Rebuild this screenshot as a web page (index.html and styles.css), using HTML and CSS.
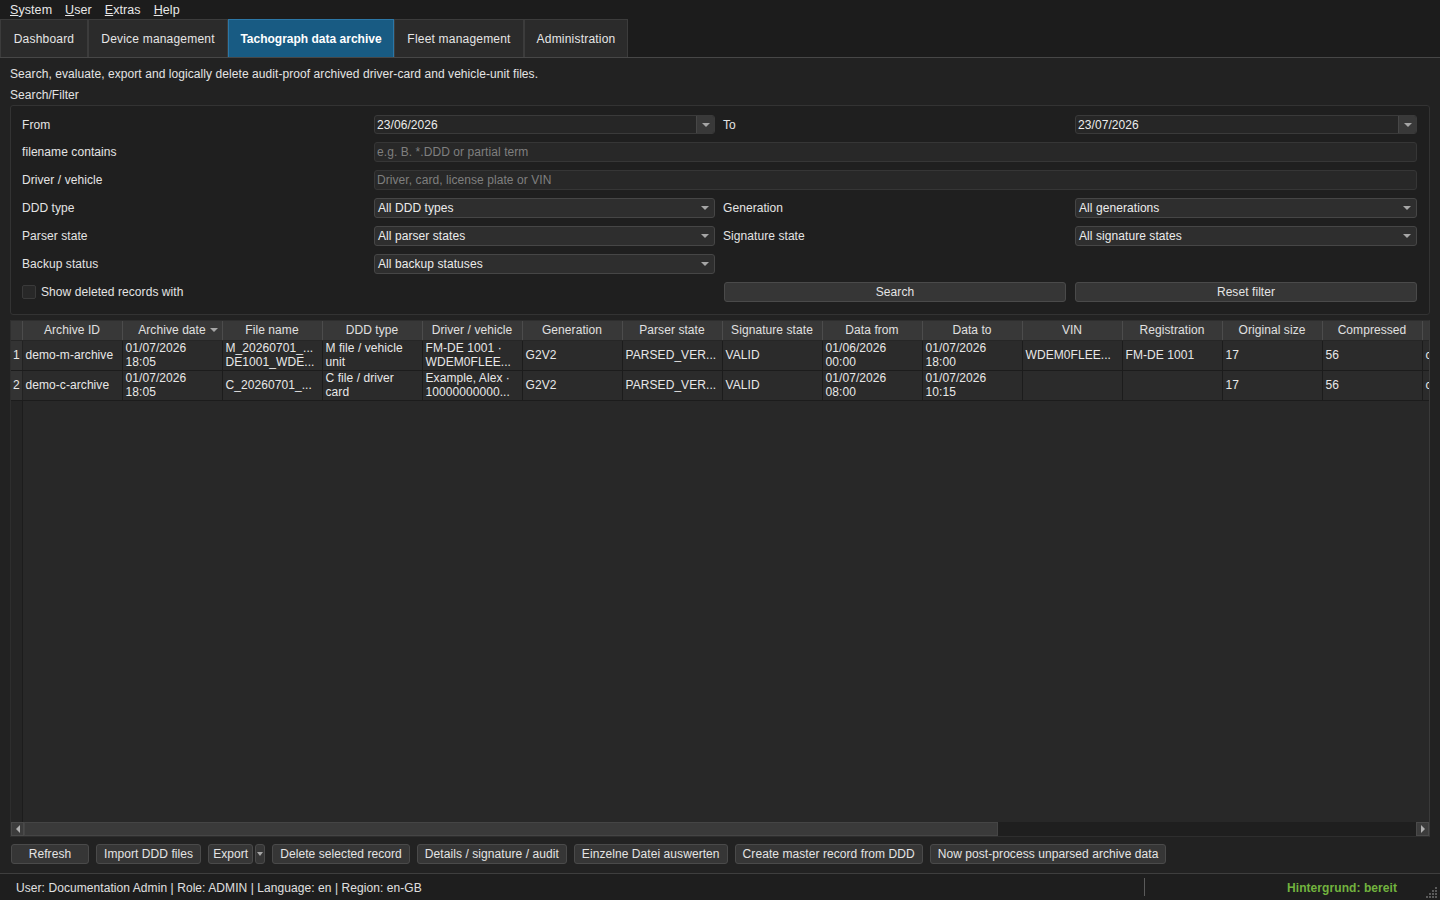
FILE: index.html
```html
<!DOCTYPE html>
<html lang="en">
<head>
  <meta charset="UTF-8">
  <title>Tachograph data archive</title>
  <link rel="stylesheet" href="styles.css">
</head>
<body>

  <div class="menubar">
    <span><u>S</u>ystem</span>
    <span><u>U</u>ser</span>
    <span><u>E</u>xtras</span>
    <span><u>H</u>elp</span>
  </div>

  <div class="tabs">
    <div class="tab t-dash">Dashboard</div>
    <div class="tab t-dev">Device management</div>
    <div class="tab t-arch active">Tachograph data archive</div>
    <div class="tab t-fleet">Fleet management</div>
    <div class="tab t-admin">Administration</div>
  </div>

  <div class="main">
    <div class="desc">Search, evaluate, export and logically delete audit-proof archived driver-card and vehicle-unit files.</div>
    <div class="section-title">Search/Filter</div>

    <div class="filter">
      <div class="lbl first">From</div>
      <div class="field date first"><span class="val">23/06/2026</span><span class="spin"><i class="tri"></i></span></div>
      <div class="lbl lbl2 first">To</div>
      <div class="field date first"><span class="val">23/07/2026</span><span class="spin"><i class="tri"></i></span></div>

      <div class="lbl">filename contains</div>
      <div class="field wide"><span class="ph">e.g. B. *.DDD or partial term</span></div>

      <div class="lbl">Driver / vehicle</div>
      <div class="field wide"><span class="ph">Driver, card, license plate or VIN</span></div>

      <div class="lbl">DDD type</div>
      <div class="field combo"><span class="val">All DDD types</span><span class="arrow"><i class="tri"></i></span></div>
      <div class="lbl lbl2">Generation</div>
      <div class="field combo"><span class="val">All generations</span><span class="arrow"><i class="tri"></i></span></div>

      <div class="lbl">Parser state</div>
      <div class="field combo"><span class="val">All parser states</span><span class="arrow"><i class="tri"></i></span></div>
      <div class="lbl lbl2">Signature state</div>
      <div class="field combo"><span class="val">All signature states</span><span class="arrow"><i class="tri"></i></span></div>

      <div class="lbl">Backup status</div>
      <div class="field combo"><span class="val">All backup statuses</span><span class="arrow"><i class="tri"></i></span></div>
      <div></div>
      <div></div>

      <div class="lbl check"><span class="box"></span>Show deleted records with</div>
      <div></div>
      <div class="btn-cell"><button class="btn full">Search</button></div>
      <div><button class="btn full">Reset filter</button></div>
    </div>

    <div class="grid-box">
      <div class="viewport">
        <table class="grid">
          <colgroup>
            <col class="rownum">
            <col><col><col><col><col><col><col><col><col><col><col><col><col><col><col>
          </colgroup>
          <thead>
            <tr>
              <th></th>
              <th>Archive ID</th>
              <th class="sorted">Archive date<i class="tri sort"></i></th>
              <th>File name</th>
              <th>DDD type</th>
              <th>Driver / vehicle</th>
              <th>Generation</th>
              <th>Parser state</th>
              <th>Signature state</th>
              <th>Data from</th>
              <th>Data to</th>
              <th>VIN</th>
              <th>Registration</th>
              <th>Original size</th>
              <th>Compressed</th>
              <th></th>
            </tr>
          </thead>
          <tbody>
            <tr>
              <td class="num">1</td>
              <td>demo-m-archive</td>
              <td>01/07/2026<br>18:05</td>
              <td>M_20260701_...<br>DE1001_WDE...</td>
              <td>M file / vehicle<br>unit</td>
              <td>FM-DE 1001 ·<br>WDEM0FLEE...</td>
              <td>G2V2</td>
              <td>PARSED_VER...</td>
              <td>VALID</td>
              <td>01/06/2026<br>00:00</td>
              <td>01/07/2026<br>18:00</td>
              <td>WDEM0FLEE...</td>
              <td>FM-DE 1001</td>
              <td>17</td>
              <td>56</td>
              <td class="cut">c</td>
            </tr>
            <tr>
              <td class="num">2</td>
              <td>demo-c-archive</td>
              <td>01/07/2026<br>18:05</td>
              <td>C_20260701_...</td>
              <td>C file / driver<br>card</td>
              <td>Example, Alex ·<br>10000000000...</td>
              <td>G2V2</td>
              <td>PARSED_VER...</td>
              <td>VALID</td>
              <td>01/07/2026<br>08:00</td>
              <td>01/07/2026<br>10:15</td>
              <td></td>
              <td></td>
              <td>17</td>
              <td>56</td>
              <td class="cut">c</td>
            </tr>
          </tbody>
        </table>
      </div>
      <div class="hscroll">
        <span class="sbtn"><i class="tri left"></i></span>
        <span class="track"><span class="thumb"></span></span>
        <span class="sbtn"><i class="tri right"></i></span>
      </div>
    </div>

    <div class="actions">
      <button class="btn refresh">Refresh</button>
      <button class="btn">Import DDD files</button>
      <div class="split">
        <button class="btn export">Export</button>
        <button class="btn drop"><i class="tri"></i></button>
      </div>
      <button class="btn">Delete selected record</button>
      <button class="btn">Details / signature / audit</button>
      <button class="btn">Einzelne Datei auswerten</button>
      <button class="btn">Create master record from DDD</button>
      <button class="btn">Now post-process unparsed archive data</button>
    </div>
  </div>

  <div class="statusbar">
    <div class="status-text">User: Documentation Admin | Role: ADMIN | Language: en | Region: en-GB</div>
    <div class="status-sep"></div>
    <div class="status-bg">Hintergrund: bereit</div>
    <svg class="grip" width="12" height="12" viewBox="0 0 12 12">
      <rect x="9" y="0" width="2" height="2" fill="#5a5a5a"/>
      <rect x="6" y="3" width="2" height="2" fill="#5a5a5a"/>
      <rect x="9" y="3" width="2" height="2" fill="#5a5a5a"/>
      <rect x="3" y="6" width="2" height="2" fill="#5a5a5a"/>
      <rect x="6" y="6" width="2" height="2" fill="#5a5a5a"/>
      <rect x="9" y="6" width="2" height="2" fill="#5a5a5a"/>
      <rect x="0" y="9" width="2" height="2" fill="#5a5a5a"/>
      <rect x="3" y="9" width="2" height="2" fill="#5a5a5a"/>
      <rect x="6" y="9" width="2" height="2" fill="#5a5a5a"/>
      <rect x="9" y="9" width="2" height="2" fill="#5a5a5a"/>
    </svg>
  </div>

</body>
</html>
```

FILE: styles.css
```css
* {
  box-sizing: border-box;
}

html, body {
  margin: 0;
  padding: 0;
}

body {
  font-family: "Liberation Sans", Arial, sans-serif;
  font-size: 12px;
  letter-spacing: 0.07px;
  color: #e4e4e4;
  background-color: #1e1e1e;
  width: 1440px;
  height: 900px;
  overflow: hidden;
  display: flex;
  flex-direction: column;
}

/* menu bar */
.menubar {
  height: 19px;
  display: flex;
  align-items: center;
  gap: 13px;
  padding-left: 10px;
  font-size: 12.5px;
  background-color: #1c1c1c;
  color: #e8e8e8;
}

/* tabs */
.tabs {
  display: flex;
  height: 39px;
  background-color: #1c1c1c;
  border-bottom: 1px solid #474747;
}

.tab {
  display: flex;
  align-items: center;
  justify-content: center;
  background-color: #2b2b2b;
  border: 1px solid #3c3c3c;
  border-bottom: none;
  color: #e6e6e6;
  letter-spacing: 0.2px;
}

.t-dash { width: 88px; }
.t-dev { width: 140px; }
.t-arch { width: 166px; }
.t-fleet { width: 130px; }
.t-admin { width: 104px; }

.tab.active {
  background-color: #185b83;
  border-color: #2c77a6;
  color: #fff;
  font-weight: bold;
  letter-spacing: 0;
}

/* main area */
.main {
  flex: 1;
  display: flex;
  flex-direction: column;
  padding: 9px 10px 9px 10px;
  background-color: #222222;
  border-bottom: 1px solid #3e3e3e;
}

.desc {
  line-height: 14px;
}

.section-title {
  line-height: 14px;
  margin-top: 7px;
}

.filter {
  margin-top: 3px;
  display: grid;
  grid-template-columns: 352px 341px 360px 342px;
  grid-template-rows: 21px;
  grid-auto-rows: 20px;
  row-gap: 8px;
  padding: 7px 12px 12px 11px;
  background-color: #1f1f1f;
  border: 1px solid #333;
  border-radius: 3px;
}

.lbl {
  display: flex;
  align-items: center;
}

.first {
  align-self: end;
  height: 19px;
}

.lbl2 {
  padding-left: 8px;
}

.field {
  display: flex;
  align-items: center;
  height: 20px;
  background-color: #282828;
  border: 1px solid #363636;
  border-radius: 3px;
  padding-left: 2px;
  overflow: hidden;
}

.field.first {
  height: 19px;
}

.field.wide {
  grid-column: 2 / 5;
}

.field .val {
  flex: 1;
  color: #ececec;
}

.field .ph {
  color: #7f7f7f;
}

.field.date {
  background-color: #262626;
  border-color: #3a3a3a;
}

.field.combo {
  background-color: #2e2e2e;
  border-color: #464646;
  padding-left: 3px;
}

.spin {
  width: 18px;
  height: 100%;
  display: flex;
  align-items: center;
  justify-content: center;
  background-color: #393939;
  border-left: 1px solid #474747;
}

.arrow {
  width: 18px;
  display: flex;
  justify-content: center;
}

.tri {
  display: inline-block;
  width: 0;
  height: 0;
  border-left: 4px solid transparent;
  border-right: 4px solid transparent;
  border-top: 4px solid #a6a6a6;
}

.tri.left {
  border-top: 4px solid transparent;
  border-bottom: 4px solid transparent;
  border-right: 4px solid #b0b0b0;
  border-left: none;
}

.tri.right {
  border-top: 4px solid transparent;
  border-bottom: 4px solid transparent;
  border-left: 4px solid #b0b0b0;
  border-right: none;
}

.check {
  gap: 5px;
}

.box {
  width: 14px;
  height: 14px;
  background-color: #282828;
  border: 1px solid #3a3a3a;
  border-radius: 2px;
}

.btn-cell {
  padding: 0 9px;
}

.btn {
  font-family: inherit;
  font-size: 12px;
  letter-spacing: 0.07px;
  color: #e4e4e4;
  height: 20px;
  padding: 0 7px;
  background-color: #363636;
  border: 1px solid #4a4a4a;
  border-radius: 3px;
  cursor: pointer;
}

.btn.full {
  width: 100%;
}

/* table */
.grid-box {
  flex: 1;
  display: flex;
  flex-direction: column;
  margin-top: 5px;
  border: 1px solid #2e2e2e;
  border-right-color: #3a3a3a;
  background-color: #272727;
  min-height: 0;
}

.viewport {
  flex: 1;
  overflow: hidden;
  background: linear-gradient(to right, #252525 0, #252525 11px, #1c1c1c 11px, #1c1c1c 12px, #282828 12px);
}

.grid {
  border-collapse: collapse;
  table-layout: fixed;
  width: 1511px;
}

.grid col {
  width: 100px;
}

.grid col.rownum {
  width: 11px;
}

.grid th {
  height: 19px;
  padding: 0 2px;
  font-weight: normal;
  color: #e0e0e0;
  background-color: #383838;
  border-right: 1px solid #4c4c4c;
  border-bottom: 1px solid #262626;
  white-space: nowrap;
  overflow: hidden;
  position: relative;
}

.grid th.sorted .sort {
  position: absolute;
  right: 4px;
  top: 7px;
}

.grid td {
  height: 30px;
  padding: 0 3px;
  line-height: 14px;
  background-color: #2b2b2b;
  border-right: 1px solid #1c1c1c;
  border-bottom: 1px solid #1c1c1c;
  white-space: nowrap;
  overflow: hidden;
  color: #e8e8e8;
}

.grid td.num {
  padding: 0 0 0 2px;
  background-color: #333;
  border-right: 1px solid #222;
}

.hscroll {
  height: 14px;
  display: flex;
  background-color: #1f1f1f;
}

.sbtn {
  width: 13px;
  height: 14px;
  display: flex;
  align-items: center;
  justify-content: center;
  background-color: #3c3c3c;
  border: 1px solid #4a4a4a;
}

.track {
  flex: 1;
  display: flex;
}

.thumb {
  width: 974px;
  background-color: #3a3a3a;
  border: 1px solid #454545;
}

/* bottom buttons */
.actions {
  display: flex;
  gap: 7px;
  margin-top: 7px;
  margin-left: 1px;
}

.btn.refresh {
  width: 78px;
}

.btn.export {
  padding: 0 4px;
}

.split {
  display: flex;
  gap: 2px;
}

.btn.drop {
  width: 10px;
  padding: 0;
  display: flex;
  align-items: center;
  justify-content: center;
}

.btn.drop .tri {
  border-left-width: 3px;
  border-right-width: 3px;
}

/* status bar */
.statusbar {
  height: 26px;
  display: flex;
  align-items: center;
  background-color: #1e1e1e;
  position: relative;
}

.status-text {
  flex: 1;
  padding-left: 16px;
  padding-top: 1px;
  color: #e0e0e0;
}

.status-sep {
  width: 1px;
  height: 18px;
  background-color: #5a5a5a;
}

.status-bg {
  width: 295px;
  text-align: right;
  padding-right: 43px;
  padding-top: 1px;
  color: #72b33e;
  font-weight: bold;
}

.grip {
  position: absolute;
  right: 2px;
  bottom: 1px;
}
```
